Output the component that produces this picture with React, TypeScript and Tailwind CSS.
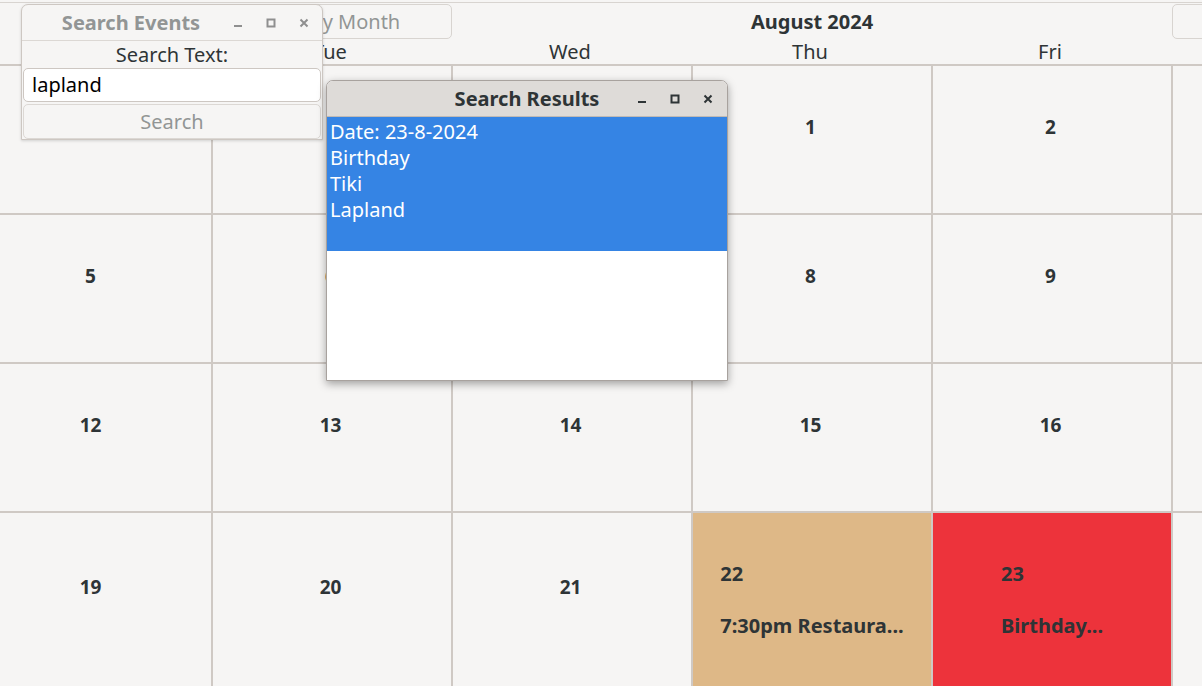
import React from "react";

const font = { fontFamily: '"Noto Sans", "Open Sans", sans-serif' };

type Cell = { day?: number; event?: string; color?: string };

const rows: Cell[][] = [
  [{}, {}, {}, { day: 1 }, { day: 2 }, {}, {}],
  [{ day: 5 }, { day: 6 }, { day: 7 }, { day: 8 }, { day: 9 }, {}, {}],
  [{ day: 12 }, { day: 13 }, { day: 14 }, { day: 15 }, { day: 16 }, {}, {}],
  [
    { day: 19 },
    { day: 20 },
    { day: 21 },
    { day: 22, event: "7:30pm Restaura...", color: "bg-[#deb887]" },
    { day: 23, event: "Birthday...", color: "bg-[#ed333b]" },
    {},
    {},
  ],
];

// only Mon..Fri headers fall inside the visible part of the window
const days = ["Mon", "Tue", "Wed", "Thu", "Fri", "", ""];

function WinButtons({ dim }: { dim?: boolean }) {
  const c = dim ? "#8f8f8f" : "#2e3436";
  return (
    <div className="flex items-center gap-[17px]">
      <svg width="16" height="16" viewBox="0 0 16 16">
        <rect x="4" y="10" width="8" height="2" fill={c} />
      </svg>
      <svg width="16" height="16" viewBox="0 0 16 16">
        <rect x="4.5" y="4.5" width="7" height="7" fill="none" stroke={c} strokeWidth="2" />
      </svg>
      <svg width="16" height="16" viewBox="0 0 16 16">
        <path d="M4.5 4.5 L11.5 11.5 M11.5 4.5 L4.5 11.5" stroke={c} strokeWidth="2" />
      </svg>
    </div>
  );
}

export default function App() {
  return (
    <div className="relative w-[1202px] h-[686px] overflow-hidden bg-[#f6f5f4] text-[#2e3436]" style={font}>
      {/* calendar, scrolled so that Monday is partly off-screen */}
      <div className="flex flex-col h-full -ml-[29px] w-[1682px]">
        <div className="mt-[2px] border-t border-[#d8d4d0] h-[38px] flex items-center relative">
          <div className="absolute left-[239px] top-[1px] w-[242px] h-[35px] rounded-[5px] border border-[#d8d4d0] flex items-center justify-center text-[20px] text-[#929595]">
            View by Month
          </div>
          <div className="flex-1 text-center text-[20px] font-bold">August 2024</div>
          <div className="absolute left-[1201px] top-[1px] w-[242px] h-[35px] rounded-[5px] border border-[#d8d4d0]" />
        </div>
        <div className="flex h-[24px] items-center text-[20px]">
          {days.map((d, i) => (
            <div key={i} className="w-[240px] shrink-0 text-center pr-[2px]">
              {d}
            </div>
          ))}
        </div>
        <div className="flex-1 bg-[#cfc9c4] pt-[2px] grid grid-cols-[repeat(7,238px)] grid-rows-[147px_147px_147px_1fr] gap-[2px] px-[2px]">
          {rows.flat().map((c, i) => (
            <div
              key={i}
              className={`${c.color ?? "bg-[#f6f5f4]"} flex flex-col items-center justify-center`}
            >
              {c.event ? (
                <div className="flex flex-col items-start font-bold text-[20px] pt-[1px]">
                  <div className="leading-[24px]">{c.day}</div>
                  <div className="leading-[24px] mt-[28px]">{c.event}</div>
                </div>
              ) : (
                <div className="font-bold text-[19px] leading-[24px] mb-[25px] pr-[3px]">{c.day ?? ""}</div>
              )}
            </div>
          ))}
        </div>
      </div>

      {/* Search Events window */}
      <div className="absolute left-[21px] top-[4px] w-[302px] h-[136px] rounded-t-[7px] border border-[#cdc7c2] bg-[#f6f5f4] flex flex-col shadow-[0_1px_3px_rgba(0,0,0,0.15)]">
        <div className="h-[36px] flex items-center border-b border-[#dcd8d4] pr-[10px]">
          <div className="flex-1 text-center text-[20px] font-bold text-[#929595] pl-[10px]">Search Events</div>
          <WinButtons dim />
        </div>
        <div className="h-[27px] text-center text-[20px] leading-[27px]">Search Text:</div>
        <div className="mx-[1px] h-[34px] rounded-[5px] border border-[#cdc7c2] bg-white flex items-center px-[8px] text-[20px] text-black">
          lapland
        </div>
        <div className="mx-[1px] mt-[2px] h-[35px] rounded-[5px] border border-[#dcd8d4] flex items-center justify-center text-[20px] text-[#929595]">
          Search
        </div>
      </div>

      {/* Search Results window */}
      <div className="absolute left-[326px] top-[80px] w-[402px] h-[301px] rounded-t-[7px] border border-[#a8a29e] bg-white flex flex-col overflow-hidden shadow-[0_3px_9px_rgba(0,0,0,0.35)]">
        <div className="relative h-[36px] bg-[#dedbd8] flex items-center justify-end border-b border-[#c0bab5] pr-[11px]">
          <div className="absolute inset-0 flex items-center justify-center text-[20px] font-bold">Search Results</div>
          <div className="relative">
            <WinButtons />
          </div>
        </div>
        <div className="h-[134px] bg-[#3584e4] text-white text-[20px] leading-[26px] px-[3px] pt-[2px]">
          <div>Date: 23-8-2024</div>
          <div>Birthday</div>
          <div>Tiki</div>
          <div>Lapland</div>
        </div>
      </div>
    </div>
  );
}
